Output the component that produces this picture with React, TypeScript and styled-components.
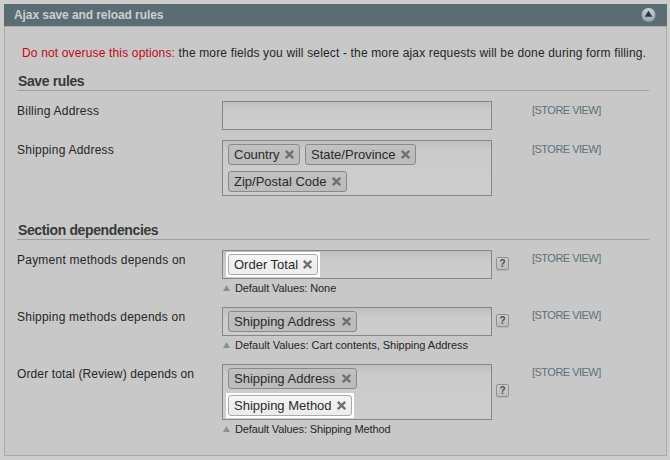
import React from "react";
import styled, { createGlobalStyle } from "styled-components";

const GlobalStyle = createGlobalStyle`
  * { box-sizing: border-box; }
  html, body { margin: 0; padding: 0; }
  body {
    background: #cdcdcd;
    color: #262626;
    font: 12px/16px "Liberation Sans", Arial, sans-serif;
  }
`;

const Page = styled.div`
  width: 670px;
  height: 460px;
  padding: 4px 3px 4px 4px;
  overflow: hidden;
`;

const Header = styled.header`
  display: flex;
  align-items: center;
  justify-content: space-between;
  height: 22px;
  padding: 0 10px;
  background: #5a6d73;
  color: #cbcfd0;
  font-weight: bold;
`;

const Title = styled.span`
  letter-spacing: -0.08px;
`;

const Panel = styled.main`
  height: 430px;
  padding: 18px 17px 0 12px;
  border: 1px solid #aaabab;
  background: #c8c8c8;
`;

const Notice = styled.p`
  margin: 0 0 0 5px;
  height: 18px;
  letter-spacing: 0.155px;
  white-space: nowrap;
`;

const Warning = styled.span`
  color: #c50714;
`;

const Heading = styled.h2<{ $gap: number }>`
  margin: ${(p) => p.$gap}px 0 10px;
  height: 18px;
  padding-left: 1px;
  border-bottom: 1px solid #9d9fa0;
  color: #363a3c;
  font-size: 14px;
  letter-spacing: -0.38px;
  line-height: 17px;
  white-space: nowrap;
`;

const Row = styled.div<{ $height: number }>`
  display: grid;
  grid-template-columns: 205px 270px 40px 1fr;
  height: ${(p) => p.$height}px;
`;

const Label = styled.label<{ $tracking?: number }>`
  padding-top: 2px;
  letter-spacing: ${(p) => p.$tracking ?? 0.23}px;
  white-space: nowrap;
`;

const Field = styled.div<{ $tall?: boolean }>`
  display: flex;
  flex-wrap: wrap;
  align-content: flex-start;
  gap: 6px 5px;
  height: ${(p) => (p.$tall ? 56 : 29)}px;
  padding: 3px 20px 3px 5px;
  border: 1px solid #858686;
  background: linear-gradient(#bfbfbf 0, #cbcbcb 9px, #cdcdcd 100%);
`;

const Spotlight = styled.span<{ $on?: boolean }>`
  margin: -2px;
  padding: 2px;
  background: ${(p) => (p.$on ? "#fff" : "transparent")};
`;

const Chip = styled.span<{ $width: number; $lit?: boolean }>`
  display: flex;
  align-items: center;
  justify-content: space-between;
  width: ${(p) => p.$width}px;
  height: 21px;
  padding: 0 5px;
  border: 1px solid ${(p) => (p.$lit ? "#aaa" : "#898989")};
  border-radius: 3px;
  background: ${(p) =>
    p.$lit
      ? "linear-gradient(#f5f5f5, #efefef 50%, #ededed)"
      : "linear-gradient(#c2c2c2, #bcbcbc 50%, #bdbdbd)"};
  color: #2a2a2a;
  font-size: 13px;
  line-height: 19px;
  white-space: nowrap;
`;

const Hint = styled.p<{ $tracking?: number }>`
  display: flex;
  align-items: center;
  gap: 5px;
  margin: 1px 0 0 1px;
  font-size: 11px;
  letter-spacing: ${(p) => p.$tracking ?? -0.1}px;
  line-height: 16px;
  white-space: nowrap;
`;

const HelpCell = styled.div<{ $top: number }>`
  padding: ${(p) => p.$top}px 0 0 4px;
`;

const Help = styled.span`
  display: block;
  width: 13px;
  height: 13px;
  border: 1px solid #929292;
  border-radius: 2px;
  background: linear-gradient(#cdcdcd, #bcbcbc);
  box-shadow: 0 1px 1px #b3b3b3;
  color: #4d4d4d;
  font-size: 10px;
  font-weight: bold;
  line-height: 11px;
  text-align: center;
`;

const Scope = styled.span<{ $top: number }>`
  padding-top: ${(p) => p.$top}px;
  color: #607078;
  font-size: 11px;
  letter-spacing: -0.52px;
  line-height: 16px;
  white-space: nowrap;
`;

function CollapseIcon() {
  return (
    <svg width="16" height="16" viewBox="0 0 16 16">
      <defs>
        <linearGradient id="knob" x1="0" y1="0" x2="0" y2="1">
          <stop offset="0" stopColor="#c9cdce" />
          <stop offset="1" stopColor="#9fa9ac" />
        </linearGradient>
      </defs>
      <circle cx="7.5" cy="8" r="7.3" fill="#809095" />
      <circle cx="7.5" cy="7.6" r="6.5" fill="url(#knob)" />
      <path d="M7.5 3.8 L11.3 9.8 H3.7 Z" fill="#173f4b" />
    </svg>
  );
}

function CloseIcon() {
  return (
    <svg width="9" height="9" viewBox="0 0 9 9">
      <path d="M0.8 0.8 L8.2 8.2 M8.2 0.8 L0.8 8.2" stroke="#707070" strokeWidth="2.3" />
    </svg>
  );
}

type Option = { text: string; width: number; lit?: boolean };

type Setting = {
  label: string;
  labelTracking?: number;
  height: number;
  tall?: boolean;
  options: Option[];
  hint?: string;
  hintTracking?: number;
};

const saveRules: Setting[] = [
  { label: "Billing Address", height: 39, options: [] },
  {
    label: "Shipping Address",
    height: 56,
    tall: true,
    options: [
      { text: "Country", width: 72 },
      { text: "State/Province", width: 111 },
      { text: "Zip/Postal Code", width: 119 },
    ],
  },
];

const dependencies: Setting[] = [
  {
    label: "Payment methods depends on",
    height: 57,
    options: [{ text: "Order Total", width: 90, lit: true }],
    hint: "None",
  },
  {
    label: "Shipping methods depends on",
    height: 57,
    options: [{ text: "Shipping Address", width: 129 }],
    hint: "Cart contents, Shipping Address",
    hintTracking: -0.02,
  },
  {
    label: "Order total (Review) depends on",
    labelTracking: 0.12,
    height: 80,
    tall: true,
    options: [
      { text: "Shipping Address", width: 129 },
      { text: "Shipping Method", width: 124, lit: true },
    ],
    hint: "Shipping Method",
    hintTracking: -0.13,
  },
];

function SettingRow(props: Setting) {
  const { label, labelTracking, height, tall, options, hint, hintTracking } = props;
  return (
    <Row $height={height}>
      <Label $tracking={labelTracking}>{label}</Label>
      <div>
        <Field $tall={tall}>
          {options.map((o) => (
            <Spotlight key={o.text} $on={o.lit}>
              <Chip $width={o.width} $lit={o.lit}>
                {o.text}
                <CloseIcon />
              </Chip>
            </Spotlight>
          ))}
        </Field>
        {hint && (
          <Hint $tracking={hintTracking}>
            <svg width="7" height="6" viewBox="0 0 7 6">
              <path d="M3.5 0 L7 6 H0 Z" fill="#80929a" />
            </svg>
            Default Values: {hint}
          </Hint>
        )}
      </div>
      <HelpCell $top={tall ? 20 : 7}>{hint && <Help>?</Help>}</HelpCell>
      <Scope $top={hint ? 0 : 1}>[STORE VIEW]</Scope>
    </Row>
  );
}

export default function App() {
  return (
    <>
      <GlobalStyle />
      <Page>
        <Header>
          <Title>Ajax save and reload rules</Title>
          <CollapseIcon />
        </Header>
        <Panel>
          <Notice>
            <Warning>Do not overuse this options:</Warning> the more fields you will select - the
            more ajax requests will be done during form filling.
          </Notice>
          <Heading $gap={10}>Save rules</Heading>
          {saveRules.map((s) => (
            <SettingRow key={s.label} {...s} />
          ))}
          <Heading $gap={26}>Section dependencies</Heading>
          {dependencies.map((s) => (
            <SettingRow key={s.label} {...s} />
          ))}
        </Panel>
      </Page>
    </>
  );
}
